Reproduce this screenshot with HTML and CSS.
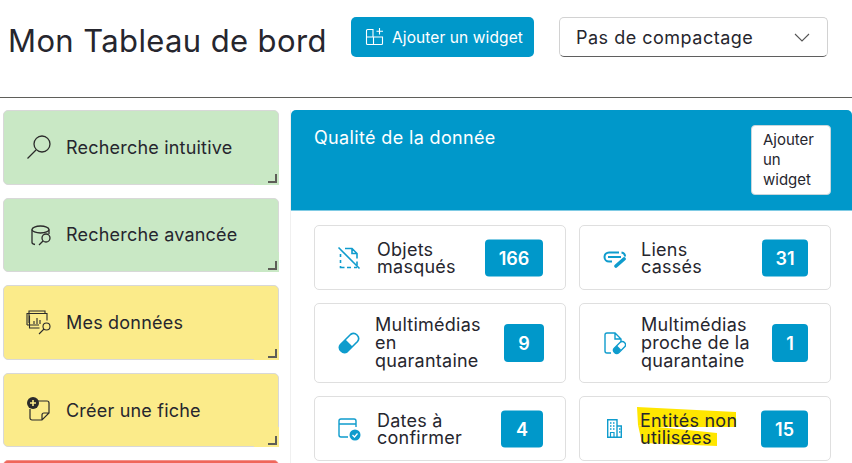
FILE: index.html
```html
<!DOCTYPE html>
<html lang="fr">
<head>
<meta charset="utf-8">
<title>Mon Tableau de bord</title>
<link rel="stylesheet" href="styles.css">
</head>
<body>
<div class="page">
  <header class="topbar">
    <h1 class="title">Mon Tableau de bord</h1>
    <button class="add-btn">
      <svg class="add-icon" viewBox="0 0 20 20" fill="none" stroke="#fff" stroke-width="1.1"><path d="M1.500 3.500a1 1 0 0 1 1-1h5.500v7.500H1.500zM1.500 10h7v7.500H2.500a1 1 0 0 1-1-1zM8.500 10h9v6.500a1 1 0 0 1-1 1H8.500zM14.500 1v6.500M11.500 4.200h6.500"/></svg>
      <span>Ajouter un widget</span>
    </button>
    <div class="select">
      <span>Pas de compactage</span>
      <svg class="chevron" viewBox="0 0 16 9" fill="none" stroke="#555" stroke-width="1.1"><path d="M1 1l7 7 7-7"/></svg>
    </div>
  </header>
  <main class="content">
    <nav class="side">
      <a class="tile green">
        <svg class="tile-icon" viewBox="0 0 26 26" fill="none" stroke="#2b2b2b" stroke-width="1.300"><circle cx="16" cy="10" r="8"/><path d="M10 16L1.500 24.500"/></svg>
        <span>Recherche intuitive</span><i class="grip"></i>
      </a>
      <a class="tile green">
        <svg class="tile-icon" viewBox="0 0 26 26" fill="none" stroke="#2b2b2b" stroke-width="1.300"><ellipse cx="14.500" cy="7.500" rx="8.500" ry="3.500"/><path d="M6 7.500v13q0 1.500 3 2M23 7.500v4.500"/><circle cx="20" cy="16" r="4"/><path d="M17 19l-4 4"/></svg>
        <span>Recherche avancée</span><i class="grip"></i>
      </a>
      <a class="tile yellow">
        <svg class="tile-icon" viewBox="0 0 26 26" fill="none" stroke="#2b2b2b" stroke-width="1.100"><path d="M3 14V2h16v2M1 16V4.500h20v7M1 16h12M3.500 6.500V19h10"/><path d="M8 15v-3M11 15V9M14 15v-4"/><circle cx="20.500" cy="17.500" r="3.500"/><path d="M18 20l-5 5"/></svg>
        <span>Mes données</span><i class="grip"></i>
      </a>
      <a class="tile yellow">
        <svg class="tile-icon" viewBox="0 0 26 26" fill="none"><path d="M12 4h9a2 2 0 0 1 2 2v10l-7 7H6a2 2 0 0 1-2-2v-9M23 16h-5a2 2 0 0 0-2 2v5" stroke="#2b2b2b" stroke-width="1.200"/><circle cx="7" cy="6" r="6" fill="#2b2b2b"/><path d="M7 3v6M4 6h6" stroke="#fbec8a" stroke-width="1.600"/></svg>
        <span>Créer une fiche</span><i class="grip"></i>
      </a>
      <a class="tile red"></a>
    </nav>
    <section class="panel">
      <div class="panel-head">
        <h2 class="panel-title">Qualité de la donnée</h2>
        <button class="panel-btn">Ajouter un widget</button>
      </div>
      <div class="grid">
        <div class="cell">
          <svg class="cell-icon" viewBox="0 0 24 24" fill="none" stroke="#0f9ccd" stroke-width="1.600"><path d="M8 2.500h7l5 5v5M20 15.500v4M3.500 8v3M3.500 14v3M3.500 20v1.500h4M10 21.500h4M17 21.500h3M15 2.500v5h5"/><path d="M1.500 1.500l21 21"/></svg>
          <span class="label lab-a">Objets masqués</span><b class="count w-58">166</b>
        </div>
        <div class="cell">
          <svg class="cell-icon" viewBox="0 0 24 24" fill="none" stroke="#0f9ccd"><path d="M17 6.500H7a4.500 4.500 0 0 0 0 9h3M6 11h13M19.500 6.500a4 4 0 0 1 3.500 4" stroke-width="2"/><path d="M14 20l8-7" stroke-width="3.600" stroke-linecap="round"/></svg>
          <span class="label lab-b">Liens cassés</span><b class="count w-46">31</b>
        </div>
        <div class="cell">
          <svg class="cell-icon" viewBox="0 0 24 24" fill="none"><path d="M3.500 13.500l10-10a5 5 0 0 1 7 7l-10 10a5 5 0 0 1-7-7z" stroke="#0f9ccd" stroke-width="1.600"/><path d="M8.500 8.500l7 7-5 5a5 5 0 0 1-7-7z" fill="#0f9ccd"/></svg>
          <span class="label lab-c">Multimédias en quarantaine</span><b class="count w-40">9</b>
        </div>
        <div class="cell">
          <svg class="cell-icon" viewBox="0 0 24 24" fill="none"><path d="M9 22H5a2 2 0 0 1-2-2V4a2 2 0 0 1 2-2h8l6 6v3M13 2v6h6" stroke="#0f9ccd" stroke-width="1.400"/><path d="M12.500 17l5.500-5.500a3 3 0 0 1 4.500 4.500L17 21.500a3 3 0 0 1-4.500-4.500z" stroke="#0f9ccd" stroke-width="1.400"/><path d="M15 14.500l4 4-2 3a3 3 0 0 1-4.500-4.500z" fill="#0f9ccd"/></svg>
          <span class="label lab-d">Multimédias proche de la quarantaine</span><b class="count w-36">1</b>
        </div>
        <div class="cell">
          <svg class="cell-icon" viewBox="0 0 24 24" fill="none"><path d="M11 20H4a2 2 0 0 1-2-2V4a2 2 0 0 1 2-2h13a2 2 0 0 1 2 2v6M2 7h17" stroke="#0f9ccd" stroke-width="1.400"/><circle cx="18" cy="18" r="5.500" fill="#0f9ccd"/><path d="M15.500 18l2 2 3-3.500" stroke="#fff" stroke-width="1.200"/></svg>
          <span class="label lab-a">Dates à confirmer</span><b class="count w-42">4</b>
        </div>
        <div class="cell">
          <svg class="marker" viewBox="0 0 110 45"><path fill="#ffe600" d="M0 0L99 5V20L5 20V18L1 18zM1 18L80 26V39L5 36z"/></svg>
          <svg class="cell-icon small" viewBox="0 0 15 19" fill="none" stroke="#0f9ccd"><path d="M.7 18.300V.7H10v17.600M10 7h4.300v11.300M0 18.300h15" stroke-width="1.400"/><path d="M3 4h1.500M6 4h1.500M3 7h1.500M6 7h1.500M3 10h1.500M6 10h1.500M12 10h1.500M12 13h1.500" stroke-width="1.500"/><path d="M3.500 18v-4.500h3.500v4.500" stroke-width="1.200"/></svg>
          <span class="label lab-e">Entités non utilisées</span><b class="count w-47">15</b>
        </div>
      </div>
    </section>
  </main>
</div>
</body>
</html>
```
FILE: styles.css
```css
* { box-sizing: border-box; }
html, body { margin: 0; padding: 0; background: #fff; }
.page { width: 852px; height: 463px; overflow: hidden; font-family: "Inter", "Liberation Sans", sans-serif; color: #26262e; }
.topbar { height: 98px; border-bottom: 1px solid #5f5f5a; padding: 17px 24px 0 8px; display: flex; align-items: flex-start; }
.title { margin: 1px 25px 0 0; width: 318px; font-size: 31px; font-weight: 400; line-height: 46px; white-space: nowrap; letter-spacing: 0.38px; }
.add-btn { width: 183px; height: 40px; border: 0; border-radius: 5px; background: #0098ca; color: #fff; display: flex; align-items: center; gap: 7px; padding: 0 0 0 14px; font: 400 15.500px "Inter", sans-serif; white-space: nowrap; letter-spacing: 0.1px; }
.add-icon { width: 20px; height: 20px; flex: none; }
.select { margin-left: 25px; width: 269px; height: 40px; border: 1px solid #d2d2d2; border-bottom: 1px solid #5f5f5f; border-radius: 5px; display: flex; align-items: center; justify-content: space-between; padding: 0 17px 0 16px; font-size: 18px; letter-spacing: 0.5px; white-space: nowrap; }
.chevron { width: 16px; height: 9px; }
.content { display: flex; padding: 12px 0 0 3px; gap: 11px; }
.side { width: 276px; flex: none; display: flex; flex-direction: column; gap: 13px; }
.tile { position: relative; height: 74.600px; flex: none; border: 1px solid #d8d8d8; border-radius: 5px; display: flex; align-items: center; padding: 0 0 0 22px; gap: 14px; font-size: 18px; letter-spacing: 0.2px; }
.green { background: #c9e8c5; }
.yellow { background: #fbeb8a; }
.red { background: #f0665a; border-color: #f0918a; }
.tile-icon { width: 26px; height: 26px; flex: none; }
.grip { position: absolute; right: -1px; bottom: -1px; width: 25px; height: 20px; background: inherit; }
.grip::after { content: ""; position: absolute; right: 2px; bottom: 2px; width: 7px; height: 7px; border-right: 2px solid #5e5e58; border-bottom: 2px solid #5e5e58; }
.panel { flex: 1; min-width: 0; border-left: 1px solid #f0f0f0; }
.panel-head { height: 101px; background: #0098ca; border-radius: 5px 5px 0 0; border-bottom: 1px solid #7fcbe4; display: flex; justify-content: space-between; align-items: flex-start; padding: 15px 21px 0 23px; }
.panel-title { margin: 0; color: #fff; font-size: 18px; font-weight: 400; line-height: 26px; letter-spacing: 0.35px; }
.panel-btn { width: 80px; height: 70px; border: 1px solid #c8d6dc; border-radius: 4px; background: #fff; color: #26262e; padding: 0 0 0 11px; text-align: left; font: 400 15px/20px "Inter", sans-serif; }
.grid { display: grid; grid-template-columns: 252px 252px; grid-template-rows: 65px 80px 65px; gap: 13px; padding: 14px 0 0 23px; }
.cell { border: 1px solid #dfdfdf; border-radius: 5px; display: flex; align-items: center; padding-left: 22px; position: relative; }
.cell-icon { width: 24px; height: 24px; flex: none; position: relative; }
.cell-icon.small { width: 15px; height: 19px; margin-left: 5px; }
.label { position: relative; font-size: 18px; line-height: 17px; letter-spacing: 0.25px; }
.lab-a { margin-left: 16px; width: 105px; }
.lab-b { margin-left: 15px; width: 105px; }
.lab-c { margin-left: 14px; width: 116px; line-height: 18px; }
.lab-d { margin-left: 15px; width: 118px; line-height: 18px; }
.lab-e { margin-left: 18px; width: 105px; }
.marker { position: absolute; left: 57px; top: 10px; width: 110px; height: 45px; }
.count { position: absolute; top: 50%; transform: translateY(-50%); right: 22px; height: 37px; border-radius: 4px; background: #0098ca; color: #fff; display: flex; align-items: center; justify-content: center; font-size: 18px; font-weight: 600; }
.w-58 { width: 58px; }
.w-46 { width: 46px; }
.w-40 { width: 40px; height: 38px; right: 21px; }
.w-36 { width: 36px; height: 38px; right: 22px; }
.w-42 { width: 42px; }
.w-47 { width: 47px; }
```
